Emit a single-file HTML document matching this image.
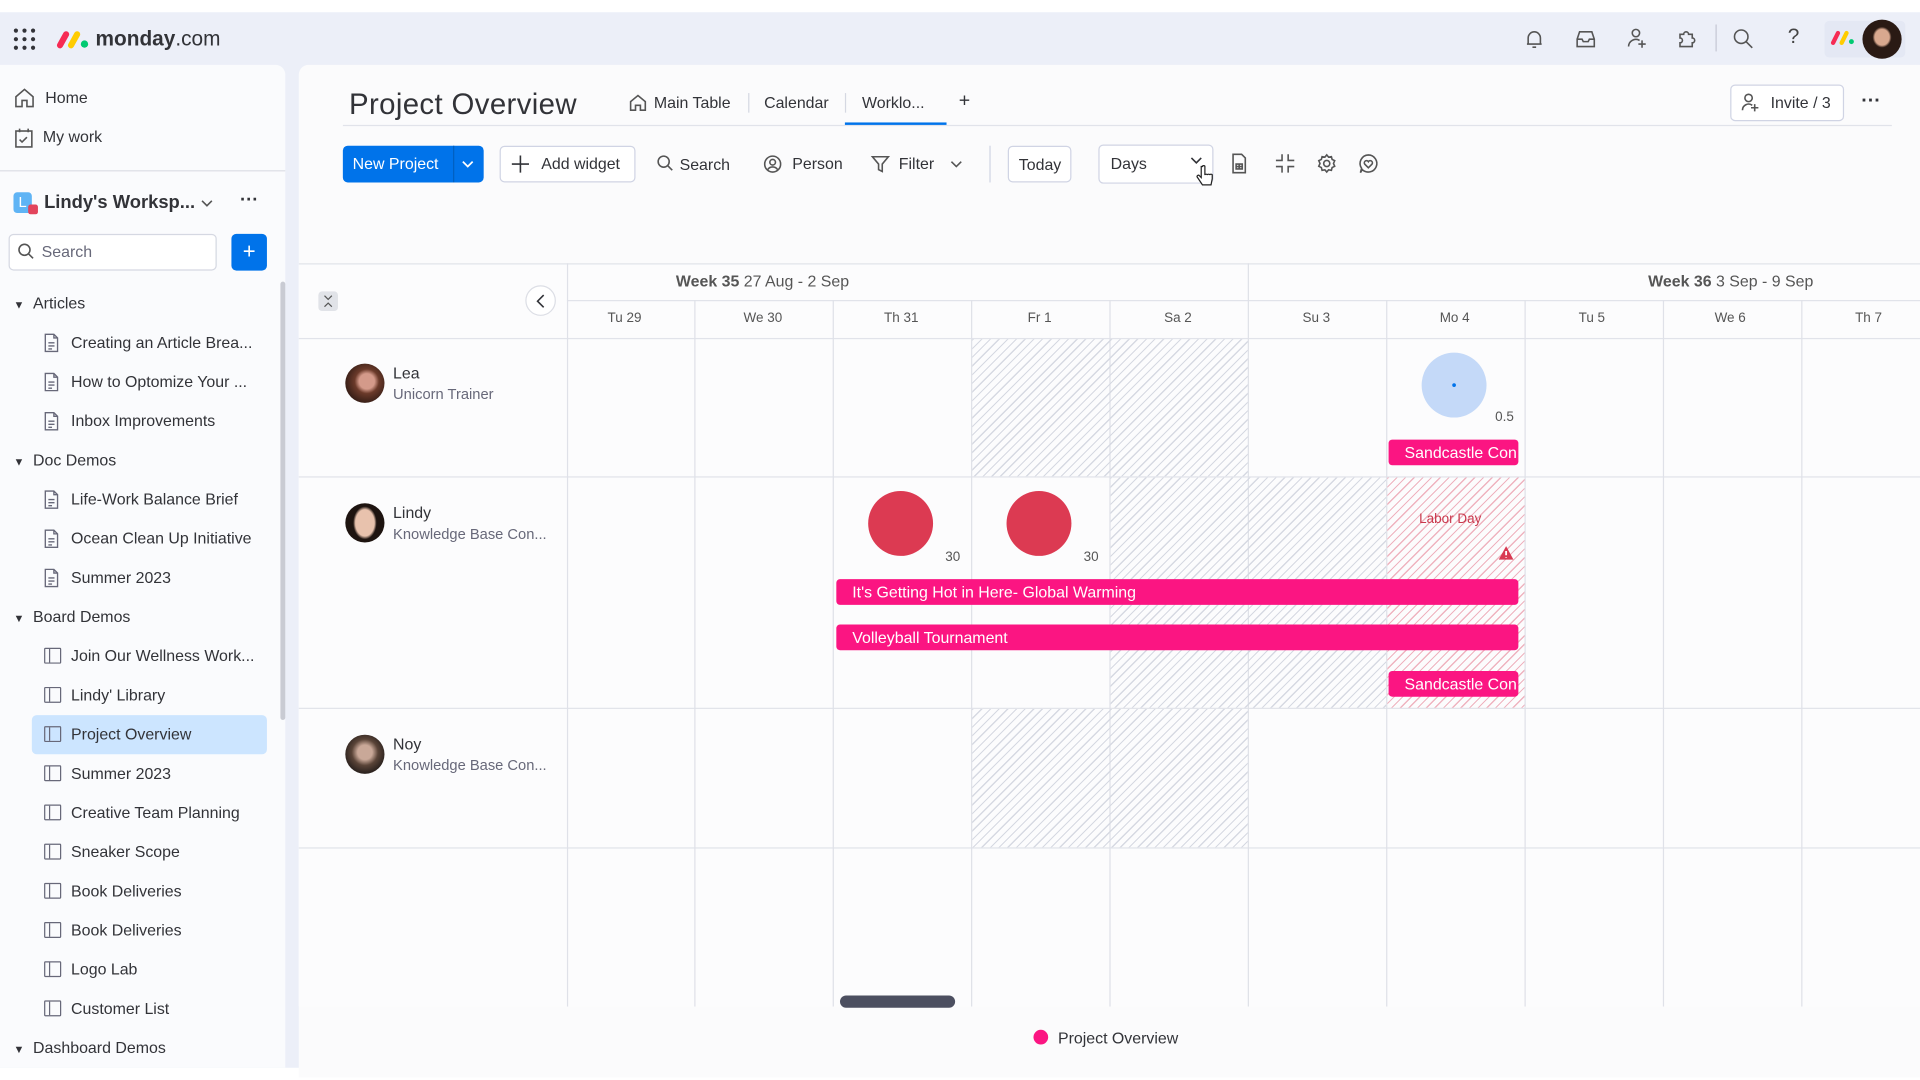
<!DOCTYPE html>
<html><head><meta charset="utf-8">
<style>
*{box-sizing:border-box;margin:0;padding:0}
html,body{width:1920px;height:1080px;overflow:hidden;background:#fff;font-family:"Liberation Sans",sans-serif;color:#323338}
#w{position:absolute;left:0;top:0;width:1568px;height:882px;transform:scale(1.22449);transform-origin:0 0;background:#fff}
.a{position:absolute}
.t{position:absolute;white-space:nowrap;font-size:13px;line-height:16px}
.hdr{left:0;top:10px;width:1568px;height:862px;background:#eceff8}
.side{left:0;top:53px;width:233px;height:819px;background:#fafbfd;border-top-right-radius:8px}
.main{left:244px;top:53px;width:1324px;height:827px;background:#fbfbfc;border-top-left-radius:8px}
.ic{position:absolute;stroke:#555;fill:none;stroke-width:1.3}
.vl{position:absolute;width:1px;background:#dfe1e8}
.hl{position:absolute;height:1px;background:#e1e3ea}
.hat{position:absolute;background:repeating-linear-gradient(135deg,#d6d9e2 0 1px,transparent 1px 5px)}
.hatp{position:absolute;background:repeating-linear-gradient(135deg,#efb3bf 0 1px,transparent 1px 5px)}
.bar{position:absolute;background:#fb1582;color:#fff;font-size:13px;line-height:21px;padding-left:13px;border-radius:3px;overflow:hidden;white-space:nowrap}
.day{position:absolute;top:254px;font-size:11px;color:#555;width:60px;text-align:center}
.btn{position:absolute;border:1px solid #d0d4e4;border-radius:4px;background:#fff}
.doc{position:absolute;width:14px;height:16px}
.brd{position:absolute;width:14px;height:13px;border:1.2px solid #676879;border-radius:1px}
.brd:after{content:"";position:absolute;left:3px;top:0;width:1px;height:11px;background:#676879}
.av{position:absolute;width:32px;height:32px;border-radius:50%}
</style></head><body><div id="w">
<svg width="0" height="0" style="position:absolute"><defs><symbol id="dc" viewBox="0 0 14 16"><path d="M2 1 H9 L12 4 V15 H2 Z M9 1 V4 H12 M4.5 8 H9.5 M4.5 10.5 H9.5 M4.5 13 H7.5" fill="none" stroke="#676879" stroke-width="1.1"/></symbol></defs></svg>
<div class="a hdr"></div>
<!-- header -->
<svg class="a" style="left:11px;top:23px" width="18" height="18"><g fill="#323338"><circle cx="2" cy="2" r="1.7"/><circle cx="9" cy="2" r="1.7"/><circle cx="16" cy="2" r="1.7"/><circle cx="2" cy="9" r="1.7"/><circle cx="9" cy="9" r="1.7"/><circle cx="16" cy="9" r="1.7"/><circle cx="2" cy="16" r="1.7"/><circle cx="9" cy="16" r="1.7"/><circle cx="16" cy="16" r="1.7"/></g></svg>
<svg class="a" style="left:46px;top:24px" width="28" height="16"><path d="M3 13 L8 4" stroke="#f62b54" stroke-width="5" stroke-linecap="round"/><path d="M12 13 L17 4" stroke="#ffcc00" stroke-width="5" stroke-linecap="round"/><circle cx="23" cy="12" r="3" fill="#00ca72"/></svg>
<div class="t" style="left:78px;top:23px;font-size:17px;line-height:18px"><b>monday</b>.com</div>
<svg class="ic" style="left:1245px;top:23px" width="16" height="18"><path d="M3 13 V8 a5 5 0 0 1 10 0 V13 H2 h12 M6.5 15.5 h3"/></svg>
<svg class="ic" style="left:1286px;top:24px" width="18" height="16"><path d="M2 8 L4 2 H14 L16 8 V14 H2 Z M2 8 H6 L7 10 H11 L12 8 H16"/></svg>
<svg class="ic" style="left:1328px;top:22px" width="18" height="18"><circle cx="8" cy="5" r="3"/><path d="M2 16 a6 6 0 0 1 9 -5 M13 11 v6 M10 14 h6"/></svg>
<svg class="ic" style="left:1369px;top:22px" width="18" height="18"><path d="M3 6 h3 a2 2 0 0 1 4 0 h3 v3 a2 2 0 0 1 0 4 v3 h-10 v-3 a2 2 0 0 0 0 -4 z"/></svg>
<div class="a" style="left:1401px;top:20px;width:1px;height:22px;background:#c5c7d4"></div>
<svg class="ic" style="left:1415px;top:23px" width="18" height="18"><circle cx="7" cy="7" r="5.5"/><path d="M11 11 L16 16"/></svg>
<div class="t" style="left:1460px;top:22px;font-size:17px;color:#444">?</div>
<div class="a" style="left:1490px;top:17px;width:66px;height:30px;border-radius:4px;background:#e4e8f4"></div>
<svg class="a" style="left:1495px;top:24px" width="20" height="14"><path d="M2 11 L6 3" stroke="#f62b54" stroke-width="3.5" stroke-linecap="round"/><path d="M9 11 L13 3" stroke="#ffcc00" stroke-width="3.5" stroke-linecap="round"/><circle cx="17" cy="10" r="2" fill="#00ca72"/></svg>
<div class="av" style="left:1521px;top:16px;background:radial-gradient(ellipse at 50% 45%,#d9a88f 0 26%,#2a1a14 34%)"></div>

<!-- sidebar -->
<div class="a side"></div>
<svg class="ic" style="left:11px;top:71px" width="18" height="18"><path d="M2 8 L9 2 L16 8 V16 H11 V11 H7 V16 H2 Z"/></svg>
<div class="t" style="left:37px;top:72px">Home</div>
<svg class="ic" style="left:11px;top:104px" width="18" height="18"><rect x="2" y="3" width="13" height="13"/><path d="M5 1 v3 M12 1 v3 M5 10 l2 2 l4 -4"/></svg>
<div class="t" style="left:35px;top:104px">My work</div>
<div class="hl" style="left:0;top:139px;width:233px;background:#dcdee6"></div>
<div class="a" style="left:11px;top:157px;width:15px;height:17px;border-radius:3px;background:#5fb4f5;color:#fff;font-size:12px;line-height:17px;text-align:center">L</div>
<div class="a" style="left:23px;top:167px;width:8px;height:8px;border-radius:2px;background:#e2445c"></div>
<div class="t" style="left:36px;top:157px;font-size:15px;line-height:18px;font-weight:bold">Lindy's Worksp...</div>
<svg class="ic" style="left:163px;top:162px" width="12" height="8"><path d="M2 2 L6 6 L10 2"/></svg>
<div class="t" style="left:196px;top:156px;font-size:15px;font-weight:bold">···</div>
<div class="a" style="left:7px;top:191px;width:170px;height:30px;border:1px solid #d5d8e2;border-radius:4px;background:#fff"></div>
<svg class="ic" style="left:14px;top:198px" width="15" height="15"><circle cx="6" cy="6" r="4.5"/><path d="M9.5 9.5 L13 13"/></svg>
<div class="t" style="left:34px;top:198px;color:#676879">Search</div>
<div class="a" style="left:189px;top:191px;width:29px;height:30px;border-radius:4px;background:#0073ea;color:#fff;font-size:18px;line-height:29px;text-align:center">+</div>
<div class="a" style="left:229px;top:230px;width:4px;height:358px;border-radius:2px;background:#c9cbd3"></div>

<div class="t" style="left:11px;top:241px;font-size:9px">▼</div><div class="t" style="left:27px;top:240px">Articles</div>
<svg class="doc" style="left:35px;top:272px"><use href="#dc"/></svg><div class="t" style="left:58px;top:272px">Creating an Article Brea...</div>
<svg class="doc" style="left:35px;top:304px"><use href="#dc"/></svg><div class="t" style="left:58px;top:304px">How to Optomize Your ...</div>
<svg class="doc" style="left:35px;top:336px"><use href="#dc"/></svg><div class="t" style="left:58px;top:336px">Inbox Improvements</div>
<div class="t" style="left:11px;top:369px;font-size:9px">▼</div><div class="t" style="left:27px;top:368px">Doc Demos</div>
<svg class="doc" style="left:35px;top:400px"><use href="#dc"/></svg><div class="t" style="left:58px;top:400px">Life-Work Balance Brief</div>
<svg class="doc" style="left:35px;top:432px"><use href="#dc"/></svg><div class="t" style="left:58px;top:432px">Ocean Clean Up Initiative</div>
<svg class="doc" style="left:35px;top:464px"><use href="#dc"/></svg><div class="t" style="left:58px;top:464px">Summer 2023</div>
<div class="t" style="left:11px;top:497px;font-size:9px">▼</div><div class="t" style="left:27px;top:496px">Board Demos</div>
<div class="brd" style="left:36px;top:529px"></div><div class="t" style="left:58px;top:528px">Join Our Wellness Work...</div>
<div class="brd" style="left:36px;top:561px"></div><div class="t" style="left:58px;top:560px">Lindy' Library</div>
<div class="a" style="left:26px;top:584px;width:192px;height:32px;border-radius:4px;background:#cce5ff"></div>
<div class="brd" style="left:36px;top:593px"></div><div class="t" style="left:58px;top:592px">Project Overview</div>
<div class="brd" style="left:36px;top:625px"></div><div class="t" style="left:58px;top:624px">Summer 2023</div>
<div class="brd" style="left:36px;top:657px"></div><div class="t" style="left:58px;top:656px">Creative Team Planning</div>
<div class="brd" style="left:36px;top:689px"></div><div class="t" style="left:58px;top:688px">Sneaker Scope</div>
<div class="brd" style="left:36px;top:721px"></div><div class="t" style="left:58px;top:720px">Book Deliveries</div>
<div class="brd" style="left:36px;top:753px"></div><div class="t" style="left:58px;top:752px">Book Deliveries</div>
<div class="brd" style="left:36px;top:785px"></div><div class="t" style="left:58px;top:784px">Logo Lab</div>
<div class="brd" style="left:36px;top:817px"></div><div class="t" style="left:58px;top:816px">Customer List</div>
<div class="t" style="left:11px;top:849px;font-size:9px">▼</div><div class="t" style="left:27px;top:848px">Dashboard Demos</div>

<!-- main -->
<div class="a main"></div>
<div class="t" style="left:285px;top:72px;font-size:24px;line-height:28px;font-weight:500;letter-spacing:0.3px">Project Overview</div>
<svg class="ic" style="left:514px;top:77px" width="14" height="14"><path d="M1 6 L7 1 L13 6 V13 H9 V9 H5 V13 H1 Z"/></svg>
<div class="t" style="left:534px;top:76px">Main Table</div>
<div class="a" style="left:611px;top:76px;width:1px;height:16px;background:#d5d8e2"></div>
<div class="t" style="left:624px;top:76px">Calendar</div>
<div class="a" style="left:690px;top:76px;width:1px;height:16px;background:#d5d8e2"></div>
<div class="t" style="left:704px;top:76px">Worklo...</div>
<div class="t" style="left:783px;top:75px;font-size:16px">+</div>
<div class="hl" style="left:280px;top:102px;width:1265px"></div>
<div class="a" style="left:690px;top:100px;width:83px;height:2px;background:#0073ea"></div>
<div class="btn" style="left:1413px;top:69px;width:93px;height:30px"></div>
<svg class="ic" style="left:1421px;top:75px" width="17" height="17"><circle cx="7" cy="5" r="3"/><path d="M2 15 a5 5 0 0 1 8 -4 M12 10 v6 M9 13 h6"/></svg>
<div class="t" style="left:1446px;top:76px">Invite / 3</div>
<div class="t" style="left:1520px;top:75px;font-size:16px;font-weight:bold">···</div>

<div class="a" style="left:280px;top:119px;width:115px;height:30px;border-radius:4px;background:#0073ea"></div>
<div class="t" style="left:288px;top:126px;color:#fff">New Project</div>
<div class="a" style="left:370px;top:119px;width:1px;height:30px;background:#0060c0"></div>
<svg class="a" style="left:376px;top:130px" width="12" height="8"><path d="M2 2 L6 6 L10 2" stroke="#fff" fill="none" stroke-width="1.4"/></svg>
<div class="btn" style="left:408px;top:119px;width:111px;height:30px"></div>
<svg class="ic" style="left:417px;top:126px" width="16" height="16"><path d="M8 1 V15 M1 8 H15" stroke="#323338"/></svg>
<div class="t" style="left:442px;top:126px">Add widget</div>
<svg class="ic" style="left:536px;top:126px" width="15" height="15"><circle cx="6" cy="6" r="4.5"/><path d="M9.5 9.5 L13 13"/></svg>
<div class="t" style="left:555px;top:127px">Search</div>
<svg class="ic" style="left:623px;top:126px" width="16" height="16"><circle cx="8" cy="8" r="6.5"/><circle cx="8" cy="6.5" r="2.3"/><path d="M4 12.5 a4.5 4 0 0 1 8 0"/></svg>
<div class="t" style="left:647px;top:126px">Person</div>
<svg class="ic" style="left:711px;top:126px" width="16" height="16"><path d="M1.5 2 H14.5 L9.5 8 V14 L6.5 12.5 V8 Z"/></svg>
<div class="t" style="left:734px;top:126px">Filter</div>
<svg class="ic" style="left:775px;top:130px" width="12" height="8"><path d="M2 2 L6 6 L10 2"/></svg>
<div class="a" style="left:808px;top:119px;width:1px;height:30px;background:#d0d4e4"></div>
<div class="btn" style="left:823px;top:119px;width:52px;height:30px"></div>
<div class="t" style="left:832px;top:127px">Today</div>
<div class="btn" style="left:897px;top:118px;width:94px;height:32px"></div>
<div class="t" style="left:907px;top:126px">Days</div>
<svg class="ic" style="left:971px;top:127px" width="12" height="8"><path d="M2 2 L6 6 L10 2" stroke="#323338"/></svg>
<svg class="a" style="left:976px;top:134px" width="16" height="20"><path d="M5 2 v9 l-2 -2 c-1 0 -2 1 -1 2 l4 6 h7 l1 -5 v-3 c0 -1 -2 -1 -2 0 c0 -1 -2 -1 -2 0 c0 -1 -2 -1 -2 0 v-7 c0 -1 -2 -1 -2 0z" fill="#fff" stroke="#222" stroke-width="1"/></svg>
<svg class="ic" style="left:1005px;top:125px" width="14" height="17"><path d="M2 1 H9 L12 4 V16 H2 Z M4.5 9 h5 v4 h-5 z M7 9 v4 M4.5 11 h5"/></svg>
<svg class="ic" style="left:1041px;top:125px" width="17" height="17"><path d="M6 1 V6 H1 M11 1 V6 H16 M6 16 V11 H1 M11 16 V11 H16"/></svg>
<svg class="ic" style="left:1075px;top:125px" width="17" height="17"><circle cx="8.5" cy="8.5" r="2.5"/><path d="M8.5 1.5 l1.5 1.8 2.3 -.4 .6 2.3 2.1 1 -1 2.3 1 2.3 -2.1 1 -.6 2.3 -2.3 -.4 -1.5 1.8 -1.5 -1.8 -2.3 .4 -.6 -2.3 -2.1 -1 1 -2.3 -1 -2.3 2.1 -1 .6 -2.3 2.3 .4z"/></svg>
<svg class="ic" style="left:1109px;top:125px" width="17" height="17"><path d="M8.5 1.5 a7 7 0 1 1 -5 12 L2 16 L3 12.5 A7 7 0 0 1 8.5 1.5z M8.5 12 l-3 -3 a1.7 1.7 0 0 1 3 -2 a1.7 1.7 0 0 1 3 2z"/></svg>

<!-- gantt -->
<div class="a" style="left:244px;top:215px;width:1324px;height:607px;background:#fcfcfd"></div>
<div class="hl" style="left:244px;top:215px;width:1324px"></div>
<div class="hl" style="left:463px;top:245px;width:1105px"></div>
<div class="hl" style="left:244px;top:276px;width:1324px"></div>
<div class="hl" style="left:244px;top:389px;width:1324px"></div>
<div class="hl" style="left:244px;top:578px;width:1324px"></div>
<div class="hl" style="left:244px;top:692px;width:1324px"></div>
<div class="vl" style="left:463px;top:215px;height:607px"></div>
<div class="vl" style="left:1019px;top:215px;height:30px"></div>
<div class="vl" style="left:567px;top:245px;height:577px"></div>
<div class="vl" style="left:680px;top:245px;height:577px"></div>
<div class="vl" style="left:793px;top:245px;height:577px"></div>
<div class="vl" style="left:906px;top:245px;height:577px"></div>
<div class="vl" style="left:1019px;top:245px;height:577px"></div>
<div class="vl" style="left:1132px;top:245px;height:577px"></div>
<div class="vl" style="left:1245px;top:245px;height:577px"></div>
<div class="vl" style="left:1358px;top:245px;height:577px"></div>
<div class="vl" style="left:1471px;top:245px;height:577px"></div>
<div class="t" style="left:552px;top:222px;color:#555"><b>Week 35</b> 27 Aug - 2 Sep</div>
<div class="t" style="left:1346px;top:222px;color:#555"><b>Week 36</b> 3 Sep - 9 Sep</div>
<div class="day" style="left:480px">Tu 29</div>
<div class="day" style="left:593px">We 30</div>
<div class="day" style="left:706px">Th 31</div>
<div class="day" style="left:819px">Fr 1</div>
<div class="day" style="left:932px">Sa 2</div>
<div class="day" style="left:1045px">Su 3</div>
<div class="day" style="left:1158px">Mo 4</div>
<div class="day" style="left:1270px">Tu 5</div>
<div class="day" style="left:1383px">We 6</div>
<div class="day" style="left:1496px">Th 7</div>
<div class="a" style="left:260px;top:238px;width:16px;height:16px;border-radius:3px;background:#e1e3e8"></div>
<svg class="a" style="left:260px;top:238px" width="16" height="16"><path d="M5 3.5 L8 6.5 L11 3.5 M5 12.5 L8 9.5 L11 12.5" fill="none" stroke="#555" stroke-width="1"/></svg>
<div class="a" style="left:429px;top:233px;width:25px;height:25px;border-radius:50%;border:1px solid #dcdee5;background:#fff"></div>
<svg class="ic" style="left:437px;top:240px" width="10" height="12"><path d="M7 1 L2 6 L7 11" stroke="#323338"/></svg>

<div class="hat" style="left:794px;top:277px;width:225px;height:112px"></div>
<div class="hat" style="left:907px;top:390px;width:225px;height:188px"></div>
<div class="hatp" style="left:1133px;top:390px;width:112px;height:188px"></div>
<div class="hat" style="left:794px;top:579px;width:225px;height:113px"></div>

<!-- people -->
<div class="av" style="left:282px;top:297px;background:radial-gradient(circle at 55% 45%,#d49a8a 0 25%,#6b3a2a 40%,#3a2018 70%)"></div>
<div class="t" style="left:321px;top:297px">Lea</div>
<div class="t" style="left:321px;top:314px;font-size:12px;color:#676879">Unicorn Trainer</div>
<div class="av" style="left:282px;top:411px;background:radial-gradient(ellipse 30% 42% at 50% 50%,#e8c2ad 0 80%,#1e1410 100%)"></div>
<div class="t" style="left:321px;top:411px">Lindy</div>
<div class="t" style="left:321px;top:428px;font-size:12px;color:#676879">Knowledge Base Con...</div>
<div class="av" style="left:282px;top:600px;background:radial-gradient(circle at 50% 45%,#c9a898 0 25%,#5a4438 45%,#2e2420 70%)"></div>
<div class="t" style="left:321px;top:600px">Noy</div>
<div class="t" style="left:321px;top:617px;font-size:12px;color:#676879">Knowledge Base Con...</div>

<!-- items -->
<div class="a" style="left:1161px;top:288px;width:53px;height:53px;border-radius:50%;background:#c4d9f8"></div>
<div class="a" style="left:1186px;top:313px;width:3px;height:3px;border-radius:50%;background:#0073ea"></div>
<div class="t" style="left:1221px;top:333px;font-size:11px;color:#555">0.5</div>
<div class="bar" style="left:1134px;top:359px;width:106px">Sandcastle Con</div>

<div class="a" style="left:709px;top:401px;width:53px;height:53px;border-radius:50%;background:#dc3a52"></div>
<div class="a" style="left:822px;top:401px;width:53px;height:53px;border-radius:50%;background:#dc3a52"></div>
<div class="t" style="left:772px;top:447px;font-size:11px;color:#555">30</div>
<div class="t" style="left:885px;top:447px;font-size:11px;color:#555">30</div>
<div class="t" style="left:1159px;top:416px;font-size:11px;color:#c9394d">Labor Day</div>
<svg class="a" style="left:1223px;top:445px" width="14" height="13"><path d="M7 1 L13 12 H1 Z" fill="#d83a52"/><path d="M7 5 v3.5 M7 10 v.5" stroke="#fff" stroke-width="1.5"/></svg>
<div class="bar" style="left:683px;top:473px;width:557px">It's Getting Hot in Here- Global Warming</div>
<div class="bar" style="left:683px;top:510px;width:557px">Volleyball Tournament</div>
<div class="bar" style="left:1134px;top:548px;width:106px">Sandcastle Con</div>

<div class="a" style="left:686px;top:813px;width:94px;height:10px;border-radius:5px;background:#4c4f60"></div>
<div class="a" style="left:844px;top:841px;width:12px;height:12px;border-radius:50%;background:#fb1582"></div>
<div class="t" style="left:864px;top:840px">Project Overview</div>
</div></body></html>
